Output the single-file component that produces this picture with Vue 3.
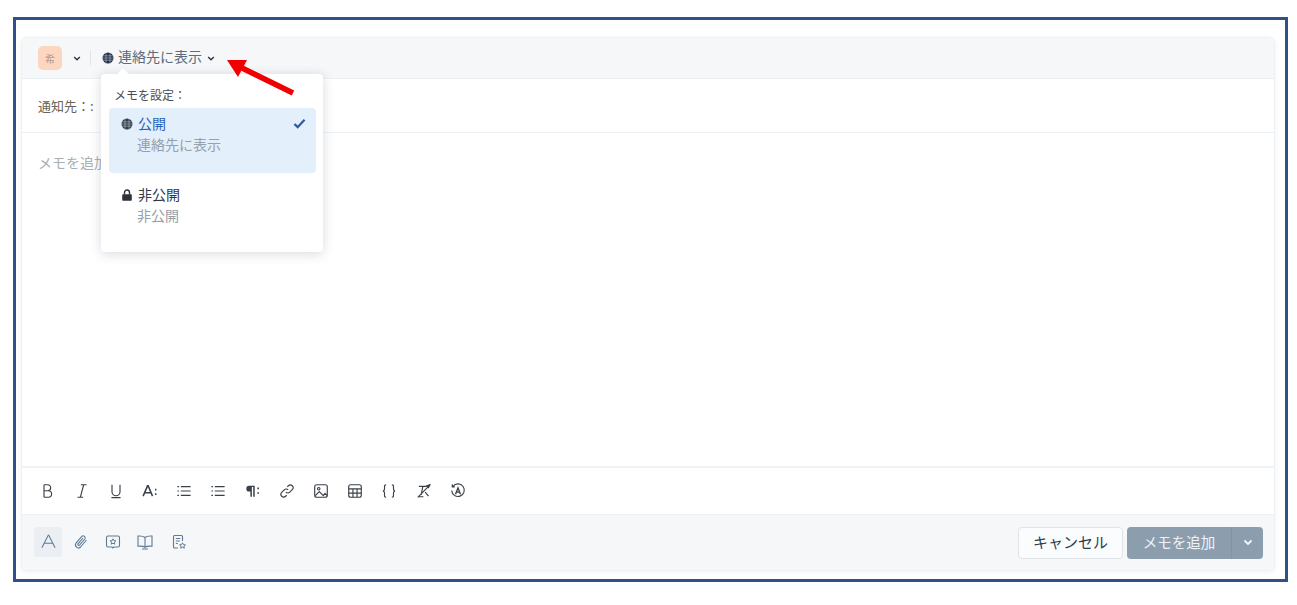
<script setup>
const fmt = [
  { k: 'b' }, { k: 'i' }, { k: 'u' }, { k: 'a' }, { k: 'ol' }, { k: 'ul' }, { k: 'p' },
  { k: 'link' }, { k: 'img' }, { k: 'tbl' }, { k: 'code' }, { k: 'clr' }, { k: 'ai' }
]
</script>

<template>
  <div class="frame">
    <div class="card">
      <header class="top">
        <span class="avatar">希</span>
        <svg class="chev c1" viewBox="0 0 10 6"><path d="M1.500 1 5 4.500 8.500 1" /></svg>
        <span class="sep"></span>
        <svg class="globe" viewBox="0 0 12 12"><circle cx="6" cy="6" r="5.500" fill="#1f3048" /><path d="M.5 3.800h11M.5 6h11M.5 8.200h11M4 .5v11M8 .5v11" stroke="#dfe5ec" stroke-width=".45" /></svg>
        <span class="vis">連絡先に表示</span>
        <svg class="chev c2" viewBox="0 0 10 6"><path d="M1.500 1 5 4.500 8.500 1" /></svg>
      </header>
      <div class="notify">通知先：:</div>
      <div class="editor">メモを追加</div>
      <div class="fmtbar">
        <span v-for="f in fmt" :key="f.k" class="fbtn">
          <svg viewBox="0 0 14 14" class="ficon">
            <path v-if="f.k === 'b'" d="M3.500 1.500v11M3.500 1.500h3.200a2.600 2.600 0 0 1 0 5.300H3.500M3.500 6.800h3.800a2.850 2.850 0 0 1 0 5.700H3.500" />
            <path v-else-if="f.k === 'i'" d="M6 1.500h5M3 12.500h5M8.500 1.500l-3 11" />
            <path v-else-if="f.k === 'u'" d="M3.500 1.500v6.200a3.500 3.500 0 0 0 7 0V1.500M3 12.800h8" />
            <g v-else-if="f.k === 'a'"><path d="M1 11.500 4.800 2.500h.6l3.800 9M2.400 8.500h5.400" stroke-width="1.300" /><path d="M12 5v1.500M12 9v1.500" stroke-width="1.300" /></g>
            <path v-else-if="f.k === 'ol' || f.k === 'ul'" d="M4.200 3.200h8.600M4.200 7h8.600M4.200 10.800h8.600M1.200 3.200h1.400M1.200 7h1.400M1.200 10.800h1.400" />
            <g v-else-if="f.k === 'p'"><path d="M3.500 2.500h5v9.500h-1.300V3.500H6V12H4.700V7.500H3.800A2.500 2.500 0 0 1 3.500 2.500Z" fill="#3a4048" stroke="none" /><path d="M11.500 4v1.500M11.500 8v1.500" stroke-width="1.400" /></g>
            <path v-else-if="f.k === 'link'" d="M6 8a2.400 2.400 0 0 0 3.400 0l2.200-2.200a2.400 2.400 0 0 0-3.400-3.400l-.9.9M8 6a2.400 2.400 0 0 0-3.400 0L2.400 8.200a2.400 2.400 0 0 0 3.400 3.400l.9-.9" />
            <g v-else-if="f.k === 'img'"><rect x="1.500" y="1.500" width="11" height="11" rx="1.800" /><circle cx="5" cy="5" r="1.100" /><path d="m2 11 3.500-3.500L9 11l1.500-2 2 2" /></g>
            <g v-else-if="f.k === 'tbl'"><rect x="1.500" y="1.500" width="11" height="11" rx="1.800" /><path d="M1.500 5.200h11M1.500 8.800h11M5.200 5.200v7.300M8.800 5.200v7.300" /></g>
            <path v-else-if="f.k === 'code'" d="M4.500 1.500c-1.800 0-1.400 1.600-1.400 3S2.800 7 1.600 7c1.200 0 1.500 1 1.500 2.500s-.4 3 1.400 3M9.500 1.500c1.800 0 1.400 1.600 1.400 3s.3 2.500 1.500 2.500c-1.200 0-1.500 1-1.500 2.500s.4 3-1.400 3" />
            <g v-else-if="f.k === 'clr'"><path d="M1.500 12.500 12.500 1.500M2.500 3h7M6 3 4.500 10.500M2.500 12h4M8 8l3 3.500" /><path d="M9.500 2.500 12 1.500 11 4Z" fill="#3a4048" /></g>
            <g v-else><path d="M2.600 3a5.500 5.500 0 1 1-1.100 3.500M2 1.200V3.400h2.200" /><path d="M4.800 9.800 7 4.200l2.200 5.600M5.500 8h3" stroke-width="1.200" /></g>
          </svg>
        </span>
      </div>
      <footer class="bottom">
        <span class="tool active">
          <svg viewBox="0 0 18 18"><path d="M2 15.500 8.700 2.500h.6L16 15.500M4.800 10.800h8.400" /></svg>
        </span>
        <span class="tool">
          <svg viewBox="0 0 16 16"><path d="M13.500 6 7.600 13a3 3 0 0 1-4.600-3.800L8.800 2.400a2 2 0 0 1 3 2.600L6.500 11.200a1 1 0 0 1-1.500-1.300L10 4" /></svg>
        </span>
        <span class="tool">
          <svg viewBox="0 0 16 16"><path d="M3 2h10a1.500 1.500 0 0 1 1.500 1.500v8A1.500 1.500 0 0 1 13 13H9l-1 1-1-1H3a1.500 1.500 0 0 1-1.500-1.500v-8A1.500 1.500 0 0 1 3 2Z" /><path d="m8 4.800.9 1.900 2 .2-1.500 1.300.4 2L8 9.200l-1.800 1 .4-2-1.500-1.300 2-.2Z" stroke-width="1" /></svg>
        </span>
        <span class="tool">
          <svg viewBox="0 0 16 16"><path d="M8 3.500C6.500 2 4 1.800 1 2v10.200c2.500-.2 5.500 0 7 1 1.500-1 4.500-1.200 7-1V2C12 1.800 9.500 2 8 3.500ZM8 3.500v9.700M5 15h6" /></svg>
        </span>
        <span class="tool last">
          <svg viewBox="0 0 16 16"><path d="M7 14H3.500A1 1 0 0 1 2.500 13V2.500a1 1 0 0 1 1-1h7a1 1 0 0 1 1 1V7M4.800 4.500h4.500M4.800 7h4M4.800 9.500h2" /><path d="m11.500 8.800.9 1.800 2 .3-1.500 1.300.4 2-1.800-1-1.800 1 .4-2-1.500-1.300 2-.3Z" stroke-width="1" /></svg>
        </span>
        <span class="grow"></span>
        <button class="cancel">キャンセル</button>
        <div class="addgroup">
          <span class="addlabel">メモを追加</span>
          <span class="addchev"><svg viewBox="0 0 10 6"><path d="M1.500 1 5 4.500 8.500 1" /></svg></span>
        </div>
      </footer>
    </div>

    <div class="pop">
      <span class="nub"></span>
      <div class="ptitle">メモを設定：</div>
      <div class="opt on">
        <div class="oline">
          <svg class="oicon" viewBox="0 0 12 12"><circle cx="6" cy="6" r="5.500" fill="#2f3a46" /><path d="M.5 3.800h11M.5 6h11M.5 8.200h11M4 .5v11M8 .5v11" stroke="#dbe6f1" stroke-width=".45" /></svg>
          <span class="oname blue">公開</span>
          <svg class="check" viewBox="0 0 14 12"><path d="M1.500 6.500 5 10l7.500-8" /></svg>
        </div>
        <div class="osub">連絡先に表示</div>
      </div>
      <div class="opt">
        <div class="oline">
          <svg class="oicon" viewBox="0 0 12 12"><path d="M2 5.200h8a.8.8 0 0 1 .8.800v5a.8.8 0 0 1-.8.800H2a.8.8 0 0 1-.8-.8V6a.8.8 0 0 1 .8-.8Z" fill="#2f3338" /><path d="M3.500 5.500V3.500a2.500 2.500 0 0 1 5 0v2" fill="none" stroke="#2f3338" stroke-width="1.400" /></svg>
          <span class="oname">非公開</span>
        </div>
        <div class="osub">非公開</div>
      </div>
    </div>

    <svg class="arrow" viewBox="0 0 70 42"><path d="M67 35 12 8" stroke="#f00000" stroke-width="5.500" fill="none" /><path d="M1 2 21 2 12 19Z" fill="#f00000" /></svg>
  </div>
</template>

<style>
html, body { margin: 0; background: #fff; }
</style>

<style scoped>
.frame {
  position: relative;
  box-sizing: border-box;
  width: 1275px;
  height: 565px;
  margin: 17px 0 0 13px;
  border: 3px solid #2f5189;
  padding: 17px 10px 8px 5px;
  font-family: "Noto Sans CJK JP", "Noto Sans", sans-serif;
  color: #3c4858;
}
.card {
  box-sizing: border-box;
  height: 100%;
  display: flex;
  flex-direction: column;
  border: 1px solid #eef1f5;
  border-radius: 6px;
  box-shadow: 0 1px 4px rgba(40, 60, 90, .08);
  overflow: hidden;
  background: #fff;
}
.top {
  height: 40px;
  flex: none;
  display: flex;
  align-items: center;
  background: #f5f7f9;
  border-bottom: 1px solid #ebf0f5;
  padding-left: 16px;
}
.avatar {
  width: 24px;
  height: 24px;
  border-radius: 5px;
  background: #fdd6c1;
  color: #b49a8c;
  font-size: 10px;
  display: flex;
  align-items: center;
  justify-content: center;
}
.chev { fill: none; stroke: #28384c; stroke-width: 1.800; width: 8px; height: 5px; }
.c1 { margin-left: 11px; }
.sep { width: 1px; height: 14px; background: #dfe3e8; margin: 0 11px 0 9px; }
.globe { width: 12px; height: 12px; }
.vis { font-size: 14px; color: #5d6b7a; margin: 0 0 4px 4px; line-height: 20px; }
.c2 { margin-left: 5px; }
.notify {
  height: 54px;
  flex: none;
  box-sizing: border-box;
  border-bottom: 1px solid #ebf0f5;
  padding: 18px 16px 0;
  font-size: 13px;
  line-height: 18px;
  color: #6a6458;
}
.editor {
  flex: 1;
  padding: 19px 16px 0;
  font-size: 14px;
  line-height: 20px;
  color: #a9aeb4;
}
.fmtbar {
  height: 48px;
  flex: none;
  box-sizing: border-box;
  border-top: 2px solid #f0f3f6;
  display: flex;
  align-items: center;
  padding-left: 12.500px;
  gap: 8.200px;
}
.fbtn { width: 26px; height: 26px; display: flex; align-items: center; justify-content: center; }
.ficon { width: 16px; height: 16px; fill: none; stroke: #3a4048; stroke-width: 1; }
.bottom {
  height: 56px;
  flex: none;
  box-sizing: border-box;
  background: #f5f7f9;
  border-top: 1px solid #ebf0f5;
  display: flex;
  align-items: center;
  padding: 0 11px 0 12px;
  gap: 4px;
}
.tool { width: 28px; height: 30px; margin-bottom: 2px; display: flex; align-items: center; justify-content: center; border-radius: 3px; }
.tool svg { width: 16px; height: 16px; fill: none; stroke: #5f7a94; stroke-width: 1.100; }
.tool.active { background: #ebeef2; }
.tool.active svg { width: 17px; height: 17px; }
.tool.active + .tool svg { margin-left: 2px; }
.tool.active + .tool + .tool svg { margin-left: 2px; }
.tool.active + .tool + .tool + .tool svg { margin-left: 2px; }
.tool.last { margin-left: 3px; }
.grow { flex: 1; }
.cancel {
  box-sizing: border-box;
  height: 32px;
  width: 105px;
  border: 1px solid #e0e4e8;
  border-radius: 4px;
  background: #fbfcfd;
  font: 15px "Noto Sans CJK JP", sans-serif;
  color: #2c3e50;
  padding: 0 0 3px;
}
.addgroup {
  height: 32px;
  width: 136px;
  display: flex;
  border-radius: 4px;
  background: #8c9eae;
  color: #eef2f5;
  font-size: 14.500px;
}
.addlabel { flex: 1; display: flex; align-items: center; justify-content: center; padding-bottom: 3px; box-sizing: border-box; border-right: 1px solid #82949f; }
.addchev { width: 31px; display: flex; align-items: center; justify-content: center; }
.addchev svg { width: 10px; height: 7px; fill: none; stroke: #f4f6f8; stroke-width: 1.800; }
.pop {
  position: absolute;
  left: 85px;
  top: 54px;
  width: 222px;
  height: 178px;
  box-sizing: border-box;
  background: #fff;
  border-radius: 4px;
  box-shadow: 0 2px 12px rgba(30, 50, 80, .18);
  padding: 12px 7px 0 8px;
}
.nub {
  position: absolute;
  left: 18px;
  top: -4px;
  width: 8px;
  height: 8px;
  background: #fff;
  transform: rotate(45deg);
}
.ptitle { font-size: 12px; line-height: 18px; color: #4a4f55; padding-left: 5px; margin-bottom: 4px; }
.opt { height: 65px; box-sizing: border-box; border-radius: 4px; padding: 5px 10px 0 12px; }
.opt + .opt { padding-top: 11px; }
.opt.on { background: #e3effb; }
.oline { display: flex; align-items: center; height: 21px; }
.oicon { width: 12px; height: 12px; flex: none; margin-top: 1px; }
.oname { font-size: 14px; color: #2c3a4a; margin: -2px 0 0 5px; }
.blue { color: #2f62b8; }
.check { width: 13px; height: 11px; margin-left: auto; fill: none; stroke: #2f5aa8; stroke-width: 2.500; }
.osub { font-size: 14px; line-height: 21px; color: #97a0a8; padding-left: 16px; }
.arrow {
  position: absolute;
  left: 210px;
  top: 38px;
  width: 70px;
  height: 42px;
}
</style>
